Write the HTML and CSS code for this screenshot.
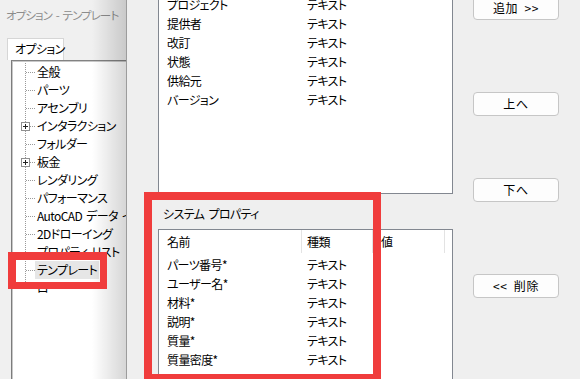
FILE: index.html
```html
<!DOCTYPE html>
<html lang="ja">
<head>
<meta charset="utf-8">
<title>オプション - テンプレート</title>
<link rel="stylesheet" href="styles.css">
</head>
<body>
<div class="screen">
  <div class="back-win">
    <div class="back-title">オプション - テンプレート</div>
    <div class="tabs"><div class="tab">オプション</div></div>
    <div class="tree">
      <ul class="tree-list">
        <li><span class="conn"></span><span class="label">全般</span></li>
        <li><span class="conn"></span><span class="label">パーツ</span></li>
        <li><span class="conn"></span><span class="label">アセンブリ</span></li>
        <li><span class="conn"><span class="plus"></span></span><span class="label">インタラクション</span></li>
        <li><span class="conn"></span><span class="label">フォルダー</span></li>
        <li><span class="conn"><span class="plus"></span></span><span class="label">板金</span></li>
        <li><span class="conn"></span><span class="label">レンダリング</span></li>
        <li><span class="conn"></span><span class="label">パフォーマンス</span></li>
        <li><span class="conn"></span><span class="label">AutoCAD データ インポート</span></li>
        <li><span class="conn"></span><span class="label">2Dドローイング</span></li>
        <li><span class="conn"></span><span class="label">プロパティ リスト</span></li>
        <li><span class="conn"></span><span class="label selected">テンプレート</span></li>
        <li class="last"><span class="conn"></span><span class="label">ロ</span></li>
      </ul>
    </div>
    <div class="shade"></div>
  </div>

  <div class="front-win">
    <div class="lists">
      <div class="listbox top-list">
        <div class="row"><span class="c-name">プロジェクト</span><span class="c-type">テキスト</span></div>
        <div class="row"><span class="c-name">提供者</span><span class="c-type">テキスト</span></div>
        <div class="row"><span class="c-name">改訂</span><span class="c-type">テキスト</span></div>
        <div class="row"><span class="c-name">状態</span><span class="c-type">テキスト</span></div>
        <div class="row"><span class="c-name">供給元</span><span class="c-type">テキスト</span></div>
        <div class="row"><span class="c-name">バージョン</span><span class="c-type">テキスト</span></div>
      </div>
      <div class="group-label">システム プロパティ</div>
      <div class="listbox sys-list">
        <div class="list-head">
          <span class="hc hc1">名前</span>
          <span class="hc hc2">種類</span>
          <span class="hc hc3">値</span>
        </div>
        <div class="list-body">
          <div class="row"><span class="c-name">パーツ番号*</span><span class="c-type">テキスト</span></div>
          <div class="row"><span class="c-name">ユーザー名*</span><span class="c-type">テキスト</span></div>
          <div class="row"><span class="c-name">材料*</span><span class="c-type">テキスト</span></div>
          <div class="row"><span class="c-name">説明*</span><span class="c-type">テキスト</span></div>
          <div class="row"><span class="c-name">質量*</span><span class="c-type">テキスト</span></div>
          <div class="row"><span class="c-name">質量密度*</span><span class="c-type">テキスト</span></div>
        </div>
      </div>
    </div>
    <div class="btn-col">
      <button class="btn btn-add">追加 &gt;&gt;</button>
      <button class="btn btn-up">上へ</button>
      <button class="btn btn-down">下へ</button>
      <button class="btn btn-del">&lt;&lt; 削除</button>
    </div>
  </div>

  <div class="mark mark-tree"></div>
  <div class="mark mark-group"></div>
</div>
</body>
</html>
```

FILE: styles.css
```css
html, body {
  margin: 0;
  padding: 0;
  width: 580px;
  height: 379px;
  overflow: hidden;
  background: #efefef;
}

body {
  font-family: "Noto Sans CJK JP", "Noto Sans", sans-serif;
  font-size: 12px;
  font-feature-settings: "palt";
  letter-spacing: -0.6px;
  word-spacing: 2px;
  color: #000;
}

.screen {
  position: relative;
  display: flex;
  width: 580px;
  height: 379px;
  overflow: hidden;
}

/* ---------- back (inactive) window ---------- */
.back-win {
  position: relative;
  flex: none;
  width: 126px;
  height: 379px;
  background: #f0f0f0;
  overflow: hidden;
  display: flex;
  flex-direction: column;
}

.back-title {
  height: 30px;
  line-height: 30px;
  padding-left: 6px;
  color: #8c8c8c;
  white-space: nowrap;
  font-size: 11.5px;
  letter-spacing: -0.9px;
  word-spacing: 2px;
}

.tabs {
  margin-top: 8px;
  height: 22px;
}

.tab {
  box-sizing: border-box;
  margin-left: 7px;
  width: 57px;
  height: 22px;
  padding-left: 7px;
  padding-top: 1px;
  line-height: 17px;
  background: #fff;
  border: 1px solid #d6d6d6;
  border-bottom: none;
  white-space: nowrap;
}

.tree {
  flex: 1;
  margin-left: 11px;
  margin-right: -30px;
  background: #fff;
  border-top: 1px solid #828282;
  border-left: 1px solid #7c7c7c;
  box-shadow: inset 1px 1px 0 #c8c8c8;
}

.tree-list {
  list-style: none;
  margin: 0;
  padding: 2px 0 0 13px;
}

.tree-list li {
  display: flex;
  height: 18px;
  line-height: 18px;
  white-space: nowrap;
}

.conn {
  position: relative;
  flex: none;
  width: 10px;
  height: 18px;
  background-image:
    repeating-linear-gradient(to bottom, #9a9a9a 0 1px, transparent 1px 2px),
    repeating-linear-gradient(to right, transparent 0 1px, #9a9a9a 1px 2px);
  background-size: 1px 100%, 100% 1px;
  background-position: 0 0, 0 9px;
  background-repeat: no-repeat;
}

.tree-list li.last .conn {
  background-size: 1px 10px, 100% 1px;
}

.plus {
  position: absolute;
  left: -4px;
  top: 5px;
  box-sizing: border-box;
  width: 9px;
  height: 9px;
  border: 1px solid #8f8f8f;
  background:
    linear-gradient(#222, #222) center / 5px 1px no-repeat,
    linear-gradient(#222, #222) center / 1px 5px no-repeat,
    #fff;
}

.label {
  padding: 0 2px;
}

.label.selected {
  background: #e6e6e6;
}

.shade {
  position: absolute;
  top: 0;
  right: 0;
  bottom: 0;
  width: 34px;
  background: linear-gradient(to right, rgba(0, 0, 0, 0), rgba(0, 0, 0, 0.16));
}

/* ---------- front window ---------- */
.front-win {
  flex: 1;
  height: 379px;
  background: #efefef;
  border-left: 1px solid #9c9c9c;
  padding-left: 31px;
  display: grid;
  grid-template-columns: 295px 86px;
  column-gap: 20px;
  align-items: start;
}

.lists {
  display: flex;
  flex-direction: column;
}

.listbox {
  box-sizing: border-box;
  background: #fff;
  border: 1px solid #828790;
}

.top-list {
  margin-top: -6px;
  height: 200px;
}

.row {
  display: grid;
  grid-template-columns: 148px 1fr;
  height: 19px;
  line-height: 19px;
  white-space: nowrap;
}

.c-name {
  padding-left: 8px;
}

.group-label {
  margin-top: 12px;
  padding-left: 5px;
  height: 16px;
  line-height: 16px;
  white-space: nowrap;
}

.sys-list {
  margin-top: 7px;
  height: 180px;
}

.list-head {
  display: flex;
  height: 23px;
  line-height: 23px;
}

.hc {
  box-sizing: border-box;
  border-right: 1px solid #e3e3e3;
  white-space: nowrap;
}

.hc1 { width: 143px; padding-left: 8px; }
.hc2 { width: 71px; padding-left: 5px; }
.hc3 { width: 72px; padding-left: 8px; }

.list-body {
  padding-top: 2px;
}

/* ---------- buttons ---------- */
.btn-col {
  display: flex;
  flex-direction: column;
}

.btn {
  box-sizing: border-box;
  width: 86px;
  height: 24px;
  padding: 0;
  margin: 0;
  font: inherit;
  font-feature-settings: "palt";
  letter-spacing: 0.6px;
  word-spacing: 3px;
  color: #000;
  line-height: 22px;
  text-align: center;
  background: #fdfdfd;
  border: 1px solid #c6c6c6;
  border-radius: 4px;
}

.btn-add { margin-top: -4px; }
.btn-up { margin-top: 72px; }
.btn-down { margin-top: 62px; }
.btn-del { margin-top: 72px; }

/* ---------- red annotation marks ---------- */
.mark {
  position: absolute;
  box-sizing: border-box;
  border: 8px solid #f03c3c;
}

.mark-tree {
  left: 8px;
  top: 252px;
  width: 99px;
  height: 37px;
  border-width: 8px 7px 7px 8px;
}

.mark-group {
  left: 144px;
  top: 192px;
  width: 237px;
  height: 190px;
}
```
